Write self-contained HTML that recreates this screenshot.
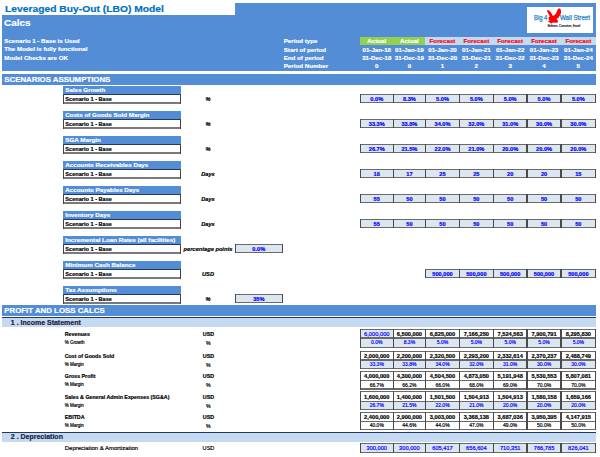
<!DOCTYPE html>
<html><head><meta charset="utf-8"><title>LBO Model - Calcs</title>
<style>
html,body{margin:0;padding:0;background:#fff;}
body{width:600px;height:457px;position:relative;overflow:hidden;font-family:"Liberation Sans",sans-serif;}
#s div{position:absolute;box-sizing:border-box;}
#s .t{white-space:nowrap;overflow:visible;-webkit-text-stroke:0.18px currentColor;}
</style></head><body><div id="s">
<div style="left:2.30px;top:15.00px;width:593.70px;height:55.60px;background:#538DD5;"></div>
<div style="left:235.10px;top:3.00px;width:360.90px;height:12.50px;background:#538DD5;"></div>
<div class="t" style="top:2.00px;height:14px;line-height:14px;font-size:9.70px;color:#0070C0;font-weight:700;left:4.60px;transform:scaleX(1.062);transform-origin:0 50%;">Leveraged Buy-Out (LBO) Model</div>
<div class="t" style="top:16.00px;height:14px;line-height:14px;font-size:9.60px;color:#fff;font-weight:700;left:4.40px;transform:scaleX(1.04);transform-origin:0 50%;">Calcs</div>
<div class="t" style="top:36.10px;height:10px;line-height:10px;font-size:6.20px;color:#fff;font-weight:700;left:4.30px;">Scenario 1 - Base is Used</div>
<div class="t" style="top:44.40px;height:10px;line-height:10px;font-size:6.20px;color:#fff;font-weight:700;left:4.30px;">The Model is fully functional</div>
<div class="t" style="top:52.70px;height:10px;line-height:10px;font-size:6.20px;color:#fff;font-weight:700;left:4.30px;">Model Checks are OK</div>
<div class="t" style="top:36.30px;height:10px;line-height:10px;font-size:6.20px;color:#fff;font-weight:700;left:283.70px;">Period type</div>
<div class="t" style="top:44.55px;height:10px;line-height:10px;font-size:6.20px;color:#fff;font-weight:700;left:283.70px;">Start of period</div>
<div class="t" style="top:52.80px;height:10px;line-height:10px;font-size:6.20px;color:#fff;font-weight:700;left:283.70px;">End of period</div>
<div class="t" style="top:61.05px;height:10px;line-height:10px;font-size:6.20px;color:#fff;font-weight:700;left:283.70px;">Period Number</div>
<div style="left:360.30px;top:37.00px;width:65.00px;height:8.35px;background:#92D050;"></div>
<div style="left:425.30px;top:37.00px;width:170.70px;height:8.35px;background:#C5D9F1;"></div>
<div class="t" style="top:36.30px;height:10px;line-height:10px;font-size:6.20px;color:#fff;font-weight:700;left:356.75px;width:40.00px;text-align:center;">Actual</div>
<div class="t" style="top:44.55px;height:10px;line-height:10px;font-size:6.20px;color:#fff;font-weight:700;left:356.75px;width:40.00px;text-align:center;">01-Jan-18</div>
<div class="t" style="top:52.80px;height:10px;line-height:10px;font-size:6.20px;color:#fff;font-weight:700;left:356.75px;width:40.00px;text-align:center;">31-Dec-18</div>
<div class="t" style="top:61.05px;height:10px;line-height:10px;font-size:6.20px;color:#fff;font-weight:700;left:356.75px;width:40.00px;text-align:center;">0</div>
<div class="t" style="top:36.30px;height:10px;line-height:10px;font-size:6.20px;color:#fff;font-weight:700;left:389.40px;width:40.00px;text-align:center;">Actual</div>
<div class="t" style="top:44.55px;height:10px;line-height:10px;font-size:6.20px;color:#fff;font-weight:700;left:389.40px;width:40.00px;text-align:center;">01-Jan-19</div>
<div class="t" style="top:52.80px;height:10px;line-height:10px;font-size:6.20px;color:#fff;font-weight:700;left:389.40px;width:40.00px;text-align:center;">31-Dec-19</div>
<div class="t" style="top:61.05px;height:10px;line-height:10px;font-size:6.20px;color:#fff;font-weight:700;left:389.40px;width:40.00px;text-align:center;">0</div>
<div class="t" style="top:36.30px;height:10px;line-height:10px;font-size:6.20px;color:#FF0000;font-weight:700;left:422.50px;width:40.00px;text-align:center;">Forecast</div>
<div class="t" style="top:44.55px;height:10px;line-height:10px;font-size:6.20px;color:#fff;font-weight:700;left:422.50px;width:40.00px;text-align:center;">01-Jan-20</div>
<div class="t" style="top:52.80px;height:10px;line-height:10px;font-size:6.20px;color:#fff;font-weight:700;left:422.50px;width:40.00px;text-align:center;">31-Dec-20</div>
<div class="t" style="top:61.05px;height:10px;line-height:10px;font-size:6.20px;color:#fff;font-weight:700;left:422.50px;width:40.00px;text-align:center;">1</div>
<div class="t" style="top:36.30px;height:10px;line-height:10px;font-size:6.20px;color:#FF0000;font-weight:700;left:456.35px;width:40.00px;text-align:center;">Forecast</div>
<div class="t" style="top:44.55px;height:10px;line-height:10px;font-size:6.20px;color:#fff;font-weight:700;left:456.35px;width:40.00px;text-align:center;">01-Jan-21</div>
<div class="t" style="top:52.80px;height:10px;line-height:10px;font-size:6.20px;color:#fff;font-weight:700;left:456.35px;width:40.00px;text-align:center;">31-Dec-21</div>
<div class="t" style="top:61.05px;height:10px;line-height:10px;font-size:6.20px;color:#fff;font-weight:700;left:456.35px;width:40.00px;text-align:center;">2</div>
<div class="t" style="top:36.30px;height:10px;line-height:10px;font-size:6.20px;color:#FF0000;font-weight:700;left:490.20px;width:40.00px;text-align:center;">Forecast</div>
<div class="t" style="top:44.55px;height:10px;line-height:10px;font-size:6.20px;color:#fff;font-weight:700;left:490.20px;width:40.00px;text-align:center;">01-Jan-22</div>
<div class="t" style="top:52.80px;height:10px;line-height:10px;font-size:6.20px;color:#fff;font-weight:700;left:490.20px;width:40.00px;text-align:center;">31-Dec-22</div>
<div class="t" style="top:61.05px;height:10px;line-height:10px;font-size:6.20px;color:#fff;font-weight:700;left:490.20px;width:40.00px;text-align:center;">3</div>
<div class="t" style="top:36.30px;height:10px;line-height:10px;font-size:6.20px;color:#FF0000;font-weight:700;left:524.05px;width:40.00px;text-align:center;">Forecast</div>
<div class="t" style="top:44.55px;height:10px;line-height:10px;font-size:6.20px;color:#fff;font-weight:700;left:524.05px;width:40.00px;text-align:center;">01-Jan-23</div>
<div class="t" style="top:52.80px;height:10px;line-height:10px;font-size:6.20px;color:#fff;font-weight:700;left:524.05px;width:40.00px;text-align:center;">31-Dec-23</div>
<div class="t" style="top:61.05px;height:10px;line-height:10px;font-size:6.20px;color:#fff;font-weight:700;left:524.05px;width:40.00px;text-align:center;">4</div>
<div class="t" style="top:36.30px;height:10px;line-height:10px;font-size:6.20px;color:#FF0000;font-weight:700;left:558.35px;width:40.00px;text-align:center;">Forecast</div>
<div class="t" style="top:44.55px;height:10px;line-height:10px;font-size:6.20px;color:#fff;font-weight:700;left:558.35px;width:40.00px;text-align:center;">01-Jan-24</div>
<div class="t" style="top:52.80px;height:10px;line-height:10px;font-size:6.20px;color:#fff;font-weight:700;left:558.35px;width:40.00px;text-align:center;">31-Dec-24</div>
<div class="t" style="top:61.05px;height:10px;line-height:10px;font-size:6.20px;color:#fff;font-weight:700;left:558.35px;width:40.00px;text-align:center;">5</div>
<div style="left:527.00px;top:6.70px;width:66.00px;height:26.00px;background:#fff;"></div>
<svg style="position:absolute;left:540px;top:4px" width="30" height="24" viewBox="0 0 571 457"><path d="M132 112 L172 126 L212 168 L243 222 L272 215 L300 185 L322 145 L338 100 L362 80 L392 96 L402 150 L388 210 L355 258 L312 288 L342 318 L338 350 L292 356 L245 350 L208 376 L192 352 L150 338 L182 312 L165 292 L160 256 L186 236 L170 200 L146 160 Z" fill="#FF0000"/></svg>
<div class="t" style="top:12.90px;height:10px;line-height:10px;font-size:6.50px;color:#2584C8;font-weight:400;left:534.00px;transform:scaleX(0.9);transform-origin:0 50%;-webkit-text-stroke:0.25px;">Big 4</div>
<div class="t" style="top:12.90px;height:10px;line-height:10px;font-size:6.50px;color:#2584C8;font-weight:400;left:560.00px;transform:scaleX(0.95);transform-origin:0 50%;-webkit-text-stroke:0.25px;">Wall Street</div>
<div class="t" style="top:20.80px;height:10px;line-height:10px;font-size:3.70px;color:#111;font-weight:400;left:533.70px;width:60.00px;text-align:center;transform:scaleX(0.8);">Believe, Conceive, Excel</div>
<div style="left:2.30px;top:74.00px;width:593.70px;height:10.75px;background:#538DD5;"></div>
<div class="t" style="top:74.50px;height:10px;line-height:10px;font-size:7.85px;color:#fff;font-weight:700;left:4.30px;">SCENARIOS ASSUMPTIONS</div>
<div style="left:63.40px;top:86.10px;width:117.60px;height:8.20px;background:#538DD5;"></div>
<div class="t" style="top:85.30px;height:10px;line-height:10px;font-size:6.25px;color:#fff;font-weight:700;left:65.30px;">Sales Growth</div>
<div style="left:63.40px;top:94.00px;width:117.60px;height:9.60px;background:#fff;"></div>
<div style="left:63.40px;top:102.35px;width:117.60px;height:1.50px;background:#7a7a7a;"></div>
<div style="left:63.40px;top:93.95px;width:117.60px;height:0.70px;background:#2b3850;"></div>
<div style="left:63.40px;top:94.10px;width:1.00px;height:9.60px;background:#444;"></div>
<div style="left:180.00px;top:94.10px;width:1.00px;height:9.60px;background:#444;"></div>
<div class="t" style="top:93.85px;height:10px;line-height:10px;font-size:5.60px;color:#000;font-weight:700;left:65.30px;">Scenario 1 - Base</div>
<div class="t" style="top:93.85px;height:10px;line-height:10px;font-size:5.70px;color:#000;font-weight:700;font-style:italic;left:178.00px;width:60.00px;text-align:center;">%</div>
<div style="left:360.30px;top:94.25px;width:235.40px;height:8.40px;background:#DCE6F1;"></div>
<div style="left:359.80px;top:93.75px;width:236.40px;height:1.00px;background:#6a6a6a;"></div>
<div style="left:359.80px;top:102.02px;width:236.40px;height:1.25px;background:#6a6a6a;"></div>
<div style="left:359.75px;top:93.75px;width:1.10px;height:9.50px;background:#4a4a4a;"></div>
<div style="left:392.50px;top:93.75px;width:1.40px;height:9.50px;background:#4a4a4a;"></div>
<div style="left:424.90px;top:93.75px;width:1.40px;height:9.50px;background:#4a4a4a;"></div>
<div style="left:458.70px;top:93.75px;width:1.40px;height:9.50px;background:#4a4a4a;"></div>
<div style="left:492.60px;top:93.75px;width:1.40px;height:9.50px;background:#4a4a4a;"></div>
<div style="left:526.40px;top:93.75px;width:1.40px;height:9.50px;background:#4a4a4a;"></div>
<div style="left:560.30px;top:93.75px;width:1.40px;height:9.50px;background:#4a4a4a;"></div>
<div style="left:595.15px;top:93.75px;width:1.10px;height:9.50px;background:#4a4a4a;"></div>
<div class="t" style="top:93.85px;height:10px;line-height:10px;font-size:5.65px;color:#0000FF;font-weight:700;left:359.75px;width:34.00px;text-align:center;">0.0%</div>
<div class="t" style="top:93.85px;height:10px;line-height:10px;font-size:5.65px;color:#0000FF;font-weight:700;left:392.40px;width:34.00px;text-align:center;">8.3%</div>
<div class="t" style="top:93.85px;height:10px;line-height:10px;font-size:5.65px;color:#0000FF;font-weight:700;left:425.50px;width:34.00px;text-align:center;">5.0%</div>
<div class="t" style="top:93.85px;height:10px;line-height:10px;font-size:5.65px;color:#0000FF;font-weight:700;left:459.35px;width:34.00px;text-align:center;">5.0%</div>
<div class="t" style="top:93.85px;height:10px;line-height:10px;font-size:5.65px;color:#0000FF;font-weight:700;left:493.20px;width:34.00px;text-align:center;">5.0%</div>
<div class="t" style="top:93.85px;height:10px;line-height:10px;font-size:5.65px;color:#0000FF;font-weight:700;left:527.05px;width:34.00px;text-align:center;">5.0%</div>
<div class="t" style="top:93.85px;height:10px;line-height:10px;font-size:5.65px;color:#0000FF;font-weight:700;left:561.35px;width:34.00px;text-align:center;">5.0%</div>
<div style="left:63.40px;top:111.10px;width:117.60px;height:8.20px;background:#538DD5;"></div>
<div class="t" style="top:110.30px;height:10px;line-height:10px;font-size:6.25px;color:#fff;font-weight:700;left:65.30px;">Costs of Goods Sold Margin</div>
<div style="left:63.40px;top:119.00px;width:117.60px;height:9.60px;background:#fff;"></div>
<div style="left:63.40px;top:127.35px;width:117.60px;height:1.50px;background:#7a7a7a;"></div>
<div style="left:63.40px;top:118.95px;width:117.60px;height:0.70px;background:#2b3850;"></div>
<div style="left:63.40px;top:119.10px;width:1.00px;height:9.60px;background:#444;"></div>
<div style="left:180.00px;top:119.10px;width:1.00px;height:9.60px;background:#444;"></div>
<div class="t" style="top:118.85px;height:10px;line-height:10px;font-size:5.60px;color:#000;font-weight:700;left:65.30px;">Scenario 1 - Base</div>
<div class="t" style="top:118.85px;height:10px;line-height:10px;font-size:5.70px;color:#000;font-weight:700;font-style:italic;left:178.00px;width:60.00px;text-align:center;">%</div>
<div style="left:360.30px;top:119.25px;width:235.40px;height:8.40px;background:#DCE6F1;"></div>
<div style="left:359.80px;top:118.75px;width:236.40px;height:1.00px;background:#6a6a6a;"></div>
<div style="left:359.80px;top:127.02px;width:236.40px;height:1.25px;background:#6a6a6a;"></div>
<div style="left:359.75px;top:118.75px;width:1.10px;height:9.50px;background:#4a4a4a;"></div>
<div style="left:392.50px;top:118.75px;width:1.40px;height:9.50px;background:#4a4a4a;"></div>
<div style="left:424.90px;top:118.75px;width:1.40px;height:9.50px;background:#4a4a4a;"></div>
<div style="left:458.70px;top:118.75px;width:1.40px;height:9.50px;background:#4a4a4a;"></div>
<div style="left:492.60px;top:118.75px;width:1.40px;height:9.50px;background:#4a4a4a;"></div>
<div style="left:526.40px;top:118.75px;width:1.40px;height:9.50px;background:#4a4a4a;"></div>
<div style="left:560.30px;top:118.75px;width:1.40px;height:9.50px;background:#4a4a4a;"></div>
<div style="left:595.15px;top:118.75px;width:1.10px;height:9.50px;background:#4a4a4a;"></div>
<div class="t" style="top:118.85px;height:10px;line-height:10px;font-size:5.65px;color:#0000FF;font-weight:700;left:359.75px;width:34.00px;text-align:center;">33.3%</div>
<div class="t" style="top:118.85px;height:10px;line-height:10px;font-size:5.65px;color:#0000FF;font-weight:700;left:392.40px;width:34.00px;text-align:center;">33.8%</div>
<div class="t" style="top:118.85px;height:10px;line-height:10px;font-size:5.65px;color:#0000FF;font-weight:700;left:425.50px;width:34.00px;text-align:center;">34.0%</div>
<div class="t" style="top:118.85px;height:10px;line-height:10px;font-size:5.65px;color:#0000FF;font-weight:700;left:459.35px;width:34.00px;text-align:center;">32.0%</div>
<div class="t" style="top:118.85px;height:10px;line-height:10px;font-size:5.65px;color:#0000FF;font-weight:700;left:493.20px;width:34.00px;text-align:center;">31.0%</div>
<div class="t" style="top:118.85px;height:10px;line-height:10px;font-size:5.65px;color:#0000FF;font-weight:700;left:527.05px;width:34.00px;text-align:center;">30.0%</div>
<div class="t" style="top:118.85px;height:10px;line-height:10px;font-size:5.65px;color:#0000FF;font-weight:700;left:561.35px;width:34.00px;text-align:center;">30.0%</div>
<div style="left:63.40px;top:136.10px;width:117.60px;height:8.20px;background:#538DD5;"></div>
<div class="t" style="top:135.30px;height:10px;line-height:10px;font-size:6.25px;color:#fff;font-weight:700;left:65.30px;">SGA Margin</div>
<div style="left:63.40px;top:144.00px;width:117.60px;height:9.60px;background:#fff;"></div>
<div style="left:63.40px;top:152.35px;width:117.60px;height:1.50px;background:#7a7a7a;"></div>
<div style="left:63.40px;top:143.95px;width:117.60px;height:0.70px;background:#2b3850;"></div>
<div style="left:63.40px;top:144.10px;width:1.00px;height:9.60px;background:#444;"></div>
<div style="left:180.00px;top:144.10px;width:1.00px;height:9.60px;background:#444;"></div>
<div class="t" style="top:143.85px;height:10px;line-height:10px;font-size:5.60px;color:#000;font-weight:700;left:65.30px;">Scenario 1 - Base</div>
<div class="t" style="top:143.85px;height:10px;line-height:10px;font-size:5.70px;color:#000;font-weight:700;font-style:italic;left:178.00px;width:60.00px;text-align:center;">%</div>
<div style="left:360.30px;top:144.25px;width:235.40px;height:8.40px;background:#DCE6F1;"></div>
<div style="left:359.80px;top:143.75px;width:236.40px;height:1.00px;background:#6a6a6a;"></div>
<div style="left:359.80px;top:152.03px;width:236.40px;height:1.25px;background:#6a6a6a;"></div>
<div style="left:359.75px;top:143.75px;width:1.10px;height:9.50px;background:#4a4a4a;"></div>
<div style="left:392.50px;top:143.75px;width:1.40px;height:9.50px;background:#4a4a4a;"></div>
<div style="left:424.90px;top:143.75px;width:1.40px;height:9.50px;background:#4a4a4a;"></div>
<div style="left:458.70px;top:143.75px;width:1.40px;height:9.50px;background:#4a4a4a;"></div>
<div style="left:492.60px;top:143.75px;width:1.40px;height:9.50px;background:#4a4a4a;"></div>
<div style="left:526.40px;top:143.75px;width:1.40px;height:9.50px;background:#4a4a4a;"></div>
<div style="left:560.30px;top:143.75px;width:1.40px;height:9.50px;background:#4a4a4a;"></div>
<div style="left:595.15px;top:143.75px;width:1.10px;height:9.50px;background:#4a4a4a;"></div>
<div class="t" style="top:143.85px;height:10px;line-height:10px;font-size:5.65px;color:#0000FF;font-weight:700;left:359.75px;width:34.00px;text-align:center;">26.7%</div>
<div class="t" style="top:143.85px;height:10px;line-height:10px;font-size:5.65px;color:#0000FF;font-weight:700;left:392.40px;width:34.00px;text-align:center;">21.5%</div>
<div class="t" style="top:143.85px;height:10px;line-height:10px;font-size:5.65px;color:#0000FF;font-weight:700;left:425.50px;width:34.00px;text-align:center;">22.0%</div>
<div class="t" style="top:143.85px;height:10px;line-height:10px;font-size:5.65px;color:#0000FF;font-weight:700;left:459.35px;width:34.00px;text-align:center;">21.0%</div>
<div class="t" style="top:143.85px;height:10px;line-height:10px;font-size:5.65px;color:#0000FF;font-weight:700;left:493.20px;width:34.00px;text-align:center;">20.0%</div>
<div class="t" style="top:143.85px;height:10px;line-height:10px;font-size:5.65px;color:#0000FF;font-weight:700;left:527.05px;width:34.00px;text-align:center;">20.0%</div>
<div class="t" style="top:143.85px;height:10px;line-height:10px;font-size:5.65px;color:#0000FF;font-weight:700;left:561.35px;width:34.00px;text-align:center;">20.0%</div>
<div style="left:63.40px;top:161.10px;width:117.60px;height:8.20px;background:#538DD5;"></div>
<div class="t" style="top:160.30px;height:10px;line-height:10px;font-size:6.25px;color:#fff;font-weight:700;left:65.30px;">Accounts Receivables Days</div>
<div style="left:63.40px;top:169.00px;width:117.60px;height:9.60px;background:#fff;"></div>
<div style="left:63.40px;top:177.35px;width:117.60px;height:1.50px;background:#7a7a7a;"></div>
<div style="left:63.40px;top:168.95px;width:117.60px;height:0.70px;background:#2b3850;"></div>
<div style="left:63.40px;top:169.10px;width:1.00px;height:9.60px;background:#444;"></div>
<div style="left:180.00px;top:169.10px;width:1.00px;height:9.60px;background:#444;"></div>
<div class="t" style="top:168.85px;height:10px;line-height:10px;font-size:5.60px;color:#000;font-weight:700;left:65.30px;">Scenario 1 - Base</div>
<div class="t" style="top:168.85px;height:10px;line-height:10px;font-size:5.70px;color:#000;font-weight:700;font-style:italic;left:178.00px;width:60.00px;text-align:center;">Days</div>
<div style="left:360.30px;top:169.25px;width:235.40px;height:8.40px;background:#DCE6F1;"></div>
<div style="left:359.80px;top:168.75px;width:236.40px;height:1.00px;background:#6a6a6a;"></div>
<div style="left:359.80px;top:177.03px;width:236.40px;height:1.25px;background:#6a6a6a;"></div>
<div style="left:359.75px;top:168.75px;width:1.10px;height:9.50px;background:#4a4a4a;"></div>
<div style="left:392.50px;top:168.75px;width:1.40px;height:9.50px;background:#4a4a4a;"></div>
<div style="left:424.90px;top:168.75px;width:1.40px;height:9.50px;background:#4a4a4a;"></div>
<div style="left:458.70px;top:168.75px;width:1.40px;height:9.50px;background:#4a4a4a;"></div>
<div style="left:492.60px;top:168.75px;width:1.40px;height:9.50px;background:#4a4a4a;"></div>
<div style="left:526.40px;top:168.75px;width:1.40px;height:9.50px;background:#4a4a4a;"></div>
<div style="left:560.30px;top:168.75px;width:1.40px;height:9.50px;background:#4a4a4a;"></div>
<div style="left:595.15px;top:168.75px;width:1.10px;height:9.50px;background:#4a4a4a;"></div>
<div class="t" style="top:168.85px;height:10px;line-height:10px;font-size:5.65px;color:#0000FF;font-weight:700;left:359.75px;width:34.00px;text-align:center;">18</div>
<div class="t" style="top:168.85px;height:10px;line-height:10px;font-size:5.65px;color:#0000FF;font-weight:700;left:392.40px;width:34.00px;text-align:center;">17</div>
<div class="t" style="top:168.85px;height:10px;line-height:10px;font-size:5.65px;color:#0000FF;font-weight:700;left:425.50px;width:34.00px;text-align:center;">25</div>
<div class="t" style="top:168.85px;height:10px;line-height:10px;font-size:5.65px;color:#0000FF;font-weight:700;left:459.35px;width:34.00px;text-align:center;">25</div>
<div class="t" style="top:168.85px;height:10px;line-height:10px;font-size:5.65px;color:#0000FF;font-weight:700;left:493.20px;width:34.00px;text-align:center;">20</div>
<div class="t" style="top:168.85px;height:10px;line-height:10px;font-size:5.65px;color:#0000FF;font-weight:700;left:527.05px;width:34.00px;text-align:center;">20</div>
<div class="t" style="top:168.85px;height:10px;line-height:10px;font-size:5.65px;color:#0000FF;font-weight:700;left:561.35px;width:34.00px;text-align:center;">15</div>
<div style="left:63.40px;top:186.10px;width:117.60px;height:8.20px;background:#538DD5;"></div>
<div class="t" style="top:185.30px;height:10px;line-height:10px;font-size:6.25px;color:#fff;font-weight:700;left:65.30px;">Accounts Payables Days</div>
<div style="left:63.40px;top:194.00px;width:117.60px;height:9.60px;background:#fff;"></div>
<div style="left:63.40px;top:202.35px;width:117.60px;height:1.50px;background:#7a7a7a;"></div>
<div style="left:63.40px;top:193.95px;width:117.60px;height:0.70px;background:#2b3850;"></div>
<div style="left:63.40px;top:194.10px;width:1.00px;height:9.60px;background:#444;"></div>
<div style="left:180.00px;top:194.10px;width:1.00px;height:9.60px;background:#444;"></div>
<div class="t" style="top:193.85px;height:10px;line-height:10px;font-size:5.60px;color:#000;font-weight:700;left:65.30px;">Scenario 1 - Base</div>
<div class="t" style="top:193.85px;height:10px;line-height:10px;font-size:5.70px;color:#000;font-weight:700;font-style:italic;left:178.00px;width:60.00px;text-align:center;">Days</div>
<div style="left:360.30px;top:194.25px;width:235.40px;height:8.40px;background:#DCE6F1;"></div>
<div style="left:359.80px;top:193.75px;width:236.40px;height:1.00px;background:#6a6a6a;"></div>
<div style="left:359.80px;top:202.03px;width:236.40px;height:1.25px;background:#6a6a6a;"></div>
<div style="left:359.75px;top:193.75px;width:1.10px;height:9.50px;background:#4a4a4a;"></div>
<div style="left:392.50px;top:193.75px;width:1.40px;height:9.50px;background:#4a4a4a;"></div>
<div style="left:424.90px;top:193.75px;width:1.40px;height:9.50px;background:#4a4a4a;"></div>
<div style="left:458.70px;top:193.75px;width:1.40px;height:9.50px;background:#4a4a4a;"></div>
<div style="left:492.60px;top:193.75px;width:1.40px;height:9.50px;background:#4a4a4a;"></div>
<div style="left:526.40px;top:193.75px;width:1.40px;height:9.50px;background:#4a4a4a;"></div>
<div style="left:560.30px;top:193.75px;width:1.40px;height:9.50px;background:#4a4a4a;"></div>
<div style="left:595.15px;top:193.75px;width:1.10px;height:9.50px;background:#4a4a4a;"></div>
<div class="t" style="top:193.85px;height:10px;line-height:10px;font-size:5.65px;color:#0000FF;font-weight:700;left:359.75px;width:34.00px;text-align:center;">55</div>
<div class="t" style="top:193.85px;height:10px;line-height:10px;font-size:5.65px;color:#0000FF;font-weight:700;left:392.40px;width:34.00px;text-align:center;">50</div>
<div class="t" style="top:193.85px;height:10px;line-height:10px;font-size:5.65px;color:#0000FF;font-weight:700;left:425.50px;width:34.00px;text-align:center;">50</div>
<div class="t" style="top:193.85px;height:10px;line-height:10px;font-size:5.65px;color:#0000FF;font-weight:700;left:459.35px;width:34.00px;text-align:center;">50</div>
<div class="t" style="top:193.85px;height:10px;line-height:10px;font-size:5.65px;color:#0000FF;font-weight:700;left:493.20px;width:34.00px;text-align:center;">50</div>
<div class="t" style="top:193.85px;height:10px;line-height:10px;font-size:5.65px;color:#0000FF;font-weight:700;left:527.05px;width:34.00px;text-align:center;">50</div>
<div class="t" style="top:193.85px;height:10px;line-height:10px;font-size:5.65px;color:#0000FF;font-weight:700;left:561.35px;width:34.00px;text-align:center;">50</div>
<div style="left:63.40px;top:211.10px;width:117.60px;height:8.20px;background:#538DD5;"></div>
<div class="t" style="top:210.30px;height:10px;line-height:10px;font-size:6.25px;color:#fff;font-weight:700;left:65.30px;">Inventory Days</div>
<div style="left:63.40px;top:219.00px;width:117.60px;height:9.60px;background:#fff;"></div>
<div style="left:63.40px;top:227.35px;width:117.60px;height:1.50px;background:#7a7a7a;"></div>
<div style="left:63.40px;top:218.95px;width:117.60px;height:0.70px;background:#2b3850;"></div>
<div style="left:63.40px;top:219.10px;width:1.00px;height:9.60px;background:#444;"></div>
<div style="left:180.00px;top:219.10px;width:1.00px;height:9.60px;background:#444;"></div>
<div class="t" style="top:218.85px;height:10px;line-height:10px;font-size:5.60px;color:#000;font-weight:700;left:65.30px;">Scenario 1 - Base</div>
<div class="t" style="top:218.85px;height:10px;line-height:10px;font-size:5.70px;color:#000;font-weight:700;font-style:italic;left:178.00px;width:60.00px;text-align:center;">Days</div>
<div style="left:360.30px;top:219.25px;width:235.40px;height:8.40px;background:#DCE6F1;"></div>
<div style="left:359.80px;top:218.75px;width:236.40px;height:1.00px;background:#6a6a6a;"></div>
<div style="left:359.80px;top:227.03px;width:236.40px;height:1.25px;background:#6a6a6a;"></div>
<div style="left:359.75px;top:218.75px;width:1.10px;height:9.50px;background:#4a4a4a;"></div>
<div style="left:392.50px;top:218.75px;width:1.40px;height:9.50px;background:#4a4a4a;"></div>
<div style="left:424.90px;top:218.75px;width:1.40px;height:9.50px;background:#4a4a4a;"></div>
<div style="left:458.70px;top:218.75px;width:1.40px;height:9.50px;background:#4a4a4a;"></div>
<div style="left:492.60px;top:218.75px;width:1.40px;height:9.50px;background:#4a4a4a;"></div>
<div style="left:526.40px;top:218.75px;width:1.40px;height:9.50px;background:#4a4a4a;"></div>
<div style="left:560.30px;top:218.75px;width:1.40px;height:9.50px;background:#4a4a4a;"></div>
<div style="left:595.15px;top:218.75px;width:1.10px;height:9.50px;background:#4a4a4a;"></div>
<div class="t" style="top:218.85px;height:10px;line-height:10px;font-size:5.65px;color:#0000FF;font-weight:700;left:359.75px;width:34.00px;text-align:center;">55</div>
<div class="t" style="top:218.85px;height:10px;line-height:10px;font-size:5.65px;color:#0000FF;font-weight:700;left:392.40px;width:34.00px;text-align:center;">50</div>
<div class="t" style="top:218.85px;height:10px;line-height:10px;font-size:5.65px;color:#0000FF;font-weight:700;left:425.50px;width:34.00px;text-align:center;">50</div>
<div class="t" style="top:218.85px;height:10px;line-height:10px;font-size:5.65px;color:#0000FF;font-weight:700;left:459.35px;width:34.00px;text-align:center;">50</div>
<div class="t" style="top:218.85px;height:10px;line-height:10px;font-size:5.65px;color:#0000FF;font-weight:700;left:493.20px;width:34.00px;text-align:center;">50</div>
<div class="t" style="top:218.85px;height:10px;line-height:10px;font-size:5.65px;color:#0000FF;font-weight:700;left:527.05px;width:34.00px;text-align:center;">50</div>
<div class="t" style="top:218.85px;height:10px;line-height:10px;font-size:5.65px;color:#0000FF;font-weight:700;left:561.35px;width:34.00px;text-align:center;">50</div>
<div style="left:63.40px;top:236.10px;width:117.60px;height:8.20px;background:#538DD5;"></div>
<div class="t" style="top:235.30px;height:10px;line-height:10px;font-size:6.25px;color:#fff;font-weight:700;left:65.30px;">Incremental Loan Rates (all facilities)</div>
<div style="left:63.40px;top:244.00px;width:117.60px;height:9.60px;background:#fff;"></div>
<div style="left:63.40px;top:252.35px;width:117.60px;height:1.50px;background:#7a7a7a;"></div>
<div style="left:63.40px;top:243.95px;width:117.60px;height:0.70px;background:#2b3850;"></div>
<div style="left:63.40px;top:244.10px;width:1.00px;height:9.60px;background:#444;"></div>
<div style="left:180.00px;top:244.10px;width:1.00px;height:9.60px;background:#444;"></div>
<div class="t" style="top:243.85px;height:10px;line-height:10px;font-size:5.60px;color:#000;font-weight:700;left:65.30px;">Scenario 1 - Base</div>
<div class="t" style="top:243.85px;height:10px;line-height:10px;font-size:5.70px;color:#000;font-weight:700;font-style:italic;left:178.00px;width:60.00px;text-align:center;">percentage points</div>
<div style="left:235.40px;top:244.25px;width:47.40px;height:8.40px;background:#DCE6F1;"></div>
<div style="left:234.90px;top:243.75px;width:48.40px;height:1.00px;background:#6a6a6a;"></div>
<div style="left:234.90px;top:252.03px;width:48.40px;height:1.25px;background:#6a6a6a;"></div>
<div style="left:234.85px;top:243.75px;width:1.10px;height:9.50px;background:#4a4a4a;"></div>
<div style="left:282.25px;top:243.75px;width:1.10px;height:9.50px;background:#4a4a4a;"></div>
<div class="t" style="top:243.85px;height:10px;line-height:10px;font-size:5.65px;color:#0000FF;font-weight:700;left:238.80px;width:40.00px;text-align:center;">0.0%</div>
<div style="left:63.40px;top:261.10px;width:117.60px;height:8.20px;background:#538DD5;"></div>
<div class="t" style="top:260.30px;height:10px;line-height:10px;font-size:6.25px;color:#fff;font-weight:700;left:65.30px;">Minimum Cash Balance</div>
<div style="left:63.40px;top:269.00px;width:117.60px;height:9.60px;background:#fff;"></div>
<div style="left:63.40px;top:277.35px;width:117.60px;height:1.50px;background:#7a7a7a;"></div>
<div style="left:63.40px;top:268.95px;width:117.60px;height:0.70px;background:#2b3850;"></div>
<div style="left:63.40px;top:269.10px;width:1.00px;height:9.60px;background:#444;"></div>
<div style="left:180.00px;top:269.10px;width:1.00px;height:9.60px;background:#444;"></div>
<div class="t" style="top:268.85px;height:10px;line-height:10px;font-size:5.60px;color:#000;font-weight:700;left:65.30px;">Scenario 1 - Base</div>
<div class="t" style="top:268.85px;height:10px;line-height:10px;font-size:5.70px;color:#000;font-weight:700;font-style:italic;left:178.00px;width:60.00px;text-align:center;">USD</div>
<div style="left:425.60px;top:269.25px;width:170.10px;height:8.40px;background:#DCE6F1;"></div>
<div style="left:425.10px;top:268.75px;width:171.10px;height:1.00px;background:#6a6a6a;"></div>
<div style="left:425.10px;top:277.03px;width:171.10px;height:1.25px;background:#6a6a6a;"></div>
<div style="left:425.05px;top:268.75px;width:1.10px;height:9.50px;background:#4a4a4a;"></div>
<div style="left:458.70px;top:268.75px;width:1.40px;height:9.50px;background:#4a4a4a;"></div>
<div style="left:492.60px;top:268.75px;width:1.40px;height:9.50px;background:#4a4a4a;"></div>
<div style="left:526.40px;top:268.75px;width:1.40px;height:9.50px;background:#4a4a4a;"></div>
<div style="left:560.30px;top:268.75px;width:1.40px;height:9.50px;background:#4a4a4a;"></div>
<div style="left:595.15px;top:268.75px;width:1.10px;height:9.50px;background:#4a4a4a;"></div>
<div class="t" style="top:268.85px;height:10px;line-height:10px;font-size:5.65px;color:#0000FF;font-weight:700;left:425.50px;width:34.00px;text-align:center;">500,000</div>
<div class="t" style="top:268.85px;height:10px;line-height:10px;font-size:5.65px;color:#0000FF;font-weight:700;left:459.35px;width:34.00px;text-align:center;">500,000</div>
<div class="t" style="top:268.85px;height:10px;line-height:10px;font-size:5.65px;color:#0000FF;font-weight:700;left:493.20px;width:34.00px;text-align:center;">500,000</div>
<div class="t" style="top:268.85px;height:10px;line-height:10px;font-size:5.65px;color:#0000FF;font-weight:700;left:527.05px;width:34.00px;text-align:center;">500,000</div>
<div class="t" style="top:268.85px;height:10px;line-height:10px;font-size:5.65px;color:#0000FF;font-weight:700;left:561.35px;width:34.00px;text-align:center;">500,000</div>
<div style="left:63.40px;top:286.10px;width:117.60px;height:8.20px;background:#538DD5;"></div>
<div class="t" style="top:285.30px;height:10px;line-height:10px;font-size:6.25px;color:#fff;font-weight:700;left:65.30px;">Tax Assumptions</div>
<div style="left:63.40px;top:294.00px;width:117.60px;height:9.60px;background:#fff;"></div>
<div style="left:63.40px;top:302.35px;width:117.60px;height:1.50px;background:#7a7a7a;"></div>
<div style="left:63.40px;top:293.95px;width:117.60px;height:0.70px;background:#2b3850;"></div>
<div style="left:63.40px;top:294.10px;width:1.00px;height:9.60px;background:#444;"></div>
<div style="left:180.00px;top:294.10px;width:1.00px;height:9.60px;background:#444;"></div>
<div class="t" style="top:293.85px;height:10px;line-height:10px;font-size:5.60px;color:#000;font-weight:700;left:65.30px;">Scenario 1 - Base</div>
<div class="t" style="top:293.85px;height:10px;line-height:10px;font-size:5.70px;color:#000;font-weight:700;font-style:italic;left:178.00px;width:60.00px;text-align:center;">%</div>
<div style="left:235.40px;top:294.25px;width:47.40px;height:8.40px;background:#DCE6F1;"></div>
<div style="left:234.90px;top:293.75px;width:48.40px;height:1.00px;background:#6a6a6a;"></div>
<div style="left:234.90px;top:302.03px;width:48.40px;height:1.25px;background:#6a6a6a;"></div>
<div style="left:234.85px;top:293.75px;width:1.10px;height:9.50px;background:#4a4a4a;"></div>
<div style="left:282.25px;top:293.75px;width:1.10px;height:9.50px;background:#4a4a4a;"></div>
<div class="t" style="top:293.85px;height:10px;line-height:10px;font-size:5.65px;color:#0000FF;font-weight:700;left:238.80px;width:40.00px;text-align:center;">35%</div>
<div style="left:2.30px;top:305.40px;width:593.70px;height:10.70px;background:#538DD5;"></div>
<div class="t" style="top:305.80px;height:10px;line-height:10px;font-size:7.85px;color:#fff;font-weight:700;left:4.30px;">PROFIT AND LOSS CALCS</div>
<div style="left:2.30px;top:316.90px;width:593.70px;height:1.50px;background:#1F3864;"></div>
<div style="left:2.30px;top:318.40px;width:593.70px;height:8.40px;background:#C5D9F1;"></div>
<div class="t" style="top:317.80px;height:10px;line-height:10px;font-size:7.00px;color:#16213E;font-weight:700;left:10.80px;">1 . Income Statement</div>
<div style="left:360.30px;top:329.40px;width:235.40px;height:17.70px;background:#fff;"></div>
<div style="left:360.30px;top:338.00px;width:235.40px;height:9.10px;background:#DCE6F1;"></div>
<div style="left:360.30px;top:329.40px;width:32.90px;height:8.60px;background:#DCE6F1;"></div>
<div style="left:359.80px;top:328.90px;width:236.40px;height:1.00px;background:#6a6a6a;"></div>
<div style="left:359.80px;top:337.45px;width:236.40px;height:1.10px;background:#6a6a6a;"></div>
<div style="left:359.80px;top:346.50px;width:236.40px;height:1.20px;background:#6a6a6a;"></div>
<div style="left:359.75px;top:328.90px;width:1.10px;height:18.80px;background:#4a4a4a;"></div>
<div style="left:392.50px;top:328.90px;width:1.40px;height:18.80px;background:#4a4a4a;"></div>
<div style="left:424.90px;top:328.90px;width:1.40px;height:18.80px;background:#4a4a4a;"></div>
<div style="left:458.70px;top:328.90px;width:1.40px;height:18.80px;background:#4a4a4a;"></div>
<div style="left:492.60px;top:328.90px;width:1.40px;height:18.80px;background:#4a4a4a;"></div>
<div style="left:526.40px;top:328.90px;width:1.40px;height:18.80px;background:#4a4a4a;"></div>
<div style="left:560.30px;top:328.90px;width:1.40px;height:18.80px;background:#4a4a4a;"></div>
<div style="left:595.15px;top:328.90px;width:1.10px;height:18.80px;background:#4a4a4a;"></div>
<div class="t" style="top:328.90px;height:10px;line-height:10px;font-size:5.30px;color:#000;font-weight:700;left:64.80px;">Revenues</div>
<div class="t" style="top:338.15px;height:10px;line-height:10px;font-size:4.50px;color:#000;font-weight:400;left:64.80px;">% Growth</div>
<div class="t" style="top:328.90px;height:10px;line-height:10px;font-size:5.35px;color:#000;font-weight:700;left:188.50px;width:40.00px;text-align:center;">USD</div>
<div class="t" style="top:337.95px;height:10px;line-height:10px;font-size:5.20px;color:#000;font-weight:400;left:188.20px;width:40.00px;text-align:center;">%</div>
<div class="t" style="top:328.90px;height:10px;line-height:10px;font-size:5.75px;color:#0000FF;font-weight:400;left:359.75px;width:34.00px;text-align:center;">6,000,000</div>
<div class="t" style="top:337.45px;height:10px;line-height:10px;font-size:5.00px;color:#0000FF;font-weight:400;left:359.75px;width:34.00px;text-align:center;">0.0%</div>
<div class="t" style="top:328.90px;height:10px;line-height:10px;font-size:5.70px;color:#000;font-weight:700;left:392.40px;width:34.00px;text-align:center;">6,500,000</div>
<div class="t" style="top:337.45px;height:10px;line-height:10px;font-size:5.00px;color:#0000FF;font-weight:400;left:392.40px;width:34.00px;text-align:center;">8.3%</div>
<div class="t" style="top:328.90px;height:10px;line-height:10px;font-size:5.70px;color:#000;font-weight:700;left:425.50px;width:34.00px;text-align:center;">6,825,000</div>
<div class="t" style="top:337.45px;height:10px;line-height:10px;font-size:5.00px;color:#0000FF;font-weight:400;left:425.50px;width:34.00px;text-align:center;">5.0%</div>
<div class="t" style="top:328.90px;height:10px;line-height:10px;font-size:5.70px;color:#000;font-weight:700;left:459.35px;width:34.00px;text-align:center;">7,166,250</div>
<div class="t" style="top:337.45px;height:10px;line-height:10px;font-size:5.00px;color:#0000FF;font-weight:400;left:459.35px;width:34.00px;text-align:center;">5.0%</div>
<div class="t" style="top:328.90px;height:10px;line-height:10px;font-size:5.70px;color:#000;font-weight:700;left:493.20px;width:34.00px;text-align:center;">7,524,563</div>
<div class="t" style="top:337.45px;height:10px;line-height:10px;font-size:5.00px;color:#0000FF;font-weight:400;left:493.20px;width:34.00px;text-align:center;">5.0%</div>
<div class="t" style="top:328.90px;height:10px;line-height:10px;font-size:5.70px;color:#000;font-weight:700;left:527.05px;width:34.00px;text-align:center;">7,900,791</div>
<div class="t" style="top:337.45px;height:10px;line-height:10px;font-size:5.00px;color:#0000FF;font-weight:400;left:527.05px;width:34.00px;text-align:center;">5.0%</div>
<div class="t" style="top:328.90px;height:10px;line-height:10px;font-size:5.70px;color:#000;font-weight:700;left:561.35px;width:34.00px;text-align:center;">8,295,830</div>
<div class="t" style="top:337.45px;height:10px;line-height:10px;font-size:5.00px;color:#0000FF;font-weight:400;left:561.35px;width:34.00px;text-align:center;">5.0%</div>
<div style="left:360.30px;top:351.25px;width:235.40px;height:17.05px;background:#fff;"></div>
<div style="left:360.30px;top:360.00px;width:235.40px;height:8.30px;background:#DCE6F1;"></div>
<div style="left:359.80px;top:350.75px;width:236.40px;height:1.00px;background:#6a6a6a;"></div>
<div style="left:359.80px;top:359.45px;width:236.40px;height:1.10px;background:#6a6a6a;"></div>
<div style="left:359.80px;top:367.70px;width:236.40px;height:1.20px;background:#6a6a6a;"></div>
<div style="left:359.75px;top:350.75px;width:1.10px;height:18.15px;background:#4a4a4a;"></div>
<div style="left:392.50px;top:350.75px;width:1.40px;height:18.15px;background:#4a4a4a;"></div>
<div style="left:424.90px;top:350.75px;width:1.40px;height:18.15px;background:#4a4a4a;"></div>
<div style="left:458.70px;top:350.75px;width:1.40px;height:18.15px;background:#4a4a4a;"></div>
<div style="left:492.60px;top:350.75px;width:1.40px;height:18.15px;background:#4a4a4a;"></div>
<div style="left:526.40px;top:350.75px;width:1.40px;height:18.15px;background:#4a4a4a;"></div>
<div style="left:560.30px;top:350.75px;width:1.40px;height:18.15px;background:#4a4a4a;"></div>
<div style="left:595.15px;top:350.75px;width:1.10px;height:18.15px;background:#4a4a4a;"></div>
<div class="t" style="top:350.82px;height:10px;line-height:10px;font-size:5.30px;color:#000;font-weight:700;left:64.80px;">Cost of Goods Sold</div>
<div class="t" style="top:359.75px;height:10px;line-height:10px;font-size:4.50px;color:#000;font-weight:400;left:64.80px;">% Margin</div>
<div class="t" style="top:350.82px;height:10px;line-height:10px;font-size:5.35px;color:#000;font-weight:700;left:188.50px;width:40.00px;text-align:center;">USD</div>
<div class="t" style="top:359.55px;height:10px;line-height:10px;font-size:5.20px;color:#000;font-weight:400;left:188.20px;width:40.00px;text-align:center;">%</div>
<div class="t" style="top:350.82px;height:10px;line-height:10px;font-size:5.70px;color:#000;font-weight:700;left:359.75px;width:34.00px;text-align:center;">2,000,000</div>
<div class="t" style="top:359.05px;height:10px;line-height:10px;font-size:5.00px;color:#0000FF;font-weight:400;left:359.75px;width:34.00px;text-align:center;">33.3%</div>
<div class="t" style="top:350.82px;height:10px;line-height:10px;font-size:5.70px;color:#000;font-weight:700;left:392.40px;width:34.00px;text-align:center;">2,200,000</div>
<div class="t" style="top:359.05px;height:10px;line-height:10px;font-size:5.00px;color:#0000FF;font-weight:400;left:392.40px;width:34.00px;text-align:center;">33.8%</div>
<div class="t" style="top:350.82px;height:10px;line-height:10px;font-size:5.70px;color:#000;font-weight:700;left:425.50px;width:34.00px;text-align:center;">2,320,500</div>
<div class="t" style="top:359.05px;height:10px;line-height:10px;font-size:5.00px;color:#0000FF;font-weight:400;left:425.50px;width:34.00px;text-align:center;">34.0%</div>
<div class="t" style="top:350.82px;height:10px;line-height:10px;font-size:5.70px;color:#000;font-weight:700;left:459.35px;width:34.00px;text-align:center;">2,293,200</div>
<div class="t" style="top:359.05px;height:10px;line-height:10px;font-size:5.00px;color:#0000FF;font-weight:400;left:459.35px;width:34.00px;text-align:center;">32.0%</div>
<div class="t" style="top:350.82px;height:10px;line-height:10px;font-size:5.70px;color:#000;font-weight:700;left:493.20px;width:34.00px;text-align:center;">2,332,614</div>
<div class="t" style="top:359.05px;height:10px;line-height:10px;font-size:5.00px;color:#0000FF;font-weight:400;left:493.20px;width:34.00px;text-align:center;">31.0%</div>
<div class="t" style="top:350.82px;height:10px;line-height:10px;font-size:5.70px;color:#000;font-weight:700;left:527.05px;width:34.00px;text-align:center;">2,370,237</div>
<div class="t" style="top:359.05px;height:10px;line-height:10px;font-size:5.00px;color:#0000FF;font-weight:400;left:527.05px;width:34.00px;text-align:center;">30.0%</div>
<div class="t" style="top:350.82px;height:10px;line-height:10px;font-size:5.70px;color:#000;font-weight:700;left:561.35px;width:34.00px;text-align:center;">2,488,749</div>
<div class="t" style="top:359.05px;height:10px;line-height:10px;font-size:5.00px;color:#0000FF;font-weight:400;left:561.35px;width:34.00px;text-align:center;">30.0%</div>
<div style="left:360.30px;top:371.25px;width:235.40px;height:17.75px;background:#fff;"></div>
<div style="left:359.80px;top:370.75px;width:236.40px;height:1.00px;background:#6a6a6a;"></div>
<div style="left:359.80px;top:379.70px;width:236.40px;height:1.10px;background:#6a6a6a;"></div>
<div style="left:359.80px;top:388.40px;width:236.40px;height:1.20px;background:#6a6a6a;"></div>
<div style="left:359.75px;top:370.75px;width:1.10px;height:18.85px;background:#4a4a4a;"></div>
<div style="left:392.50px;top:370.75px;width:1.40px;height:18.85px;background:#4a4a4a;"></div>
<div style="left:424.90px;top:370.75px;width:1.40px;height:18.85px;background:#4a4a4a;"></div>
<div style="left:458.70px;top:370.75px;width:1.40px;height:18.85px;background:#4a4a4a;"></div>
<div style="left:492.60px;top:370.75px;width:1.40px;height:18.85px;background:#4a4a4a;"></div>
<div style="left:526.40px;top:370.75px;width:1.40px;height:18.85px;background:#4a4a4a;"></div>
<div style="left:560.30px;top:370.75px;width:1.40px;height:18.85px;background:#4a4a4a;"></div>
<div style="left:595.15px;top:370.75px;width:1.10px;height:18.85px;background:#4a4a4a;"></div>
<div class="t" style="top:370.95px;height:10px;line-height:10px;font-size:5.30px;color:#000;font-weight:700;left:64.80px;">Gross Profit</div>
<div class="t" style="top:380.23px;height:10px;line-height:10px;font-size:4.50px;color:#000;font-weight:400;left:64.80px;">% Margin</div>
<div class="t" style="top:370.95px;height:10px;line-height:10px;font-size:5.35px;color:#000;font-weight:700;left:188.50px;width:40.00px;text-align:center;">USD</div>
<div class="t" style="top:380.02px;height:10px;line-height:10px;font-size:5.20px;color:#000;font-weight:400;left:188.20px;width:40.00px;text-align:center;">%</div>
<div class="t" style="top:370.95px;height:10px;line-height:10px;font-size:5.70px;color:#000;font-weight:700;left:359.75px;width:34.00px;text-align:center;">4,000,000</div>
<div class="t" style="top:379.52px;height:10px;line-height:10px;font-size:5.00px;color:#000;font-weight:400;left:359.75px;width:34.00px;text-align:center;">66.7%</div>
<div class="t" style="top:370.95px;height:10px;line-height:10px;font-size:5.70px;color:#000;font-weight:700;left:392.40px;width:34.00px;text-align:center;">4,300,000</div>
<div class="t" style="top:379.52px;height:10px;line-height:10px;font-size:5.00px;color:#000;font-weight:400;left:392.40px;width:34.00px;text-align:center;">66.2%</div>
<div class="t" style="top:370.95px;height:10px;line-height:10px;font-size:5.70px;color:#000;font-weight:700;left:425.50px;width:34.00px;text-align:center;">4,504,500</div>
<div class="t" style="top:379.52px;height:10px;line-height:10px;font-size:5.00px;color:#000;font-weight:400;left:425.50px;width:34.00px;text-align:center;">66.0%</div>
<div class="t" style="top:370.95px;height:10px;line-height:10px;font-size:5.70px;color:#000;font-weight:700;left:459.35px;width:34.00px;text-align:center;">4,873,050</div>
<div class="t" style="top:379.52px;height:10px;line-height:10px;font-size:5.00px;color:#000;font-weight:400;left:459.35px;width:34.00px;text-align:center;">68.0%</div>
<div class="t" style="top:370.95px;height:10px;line-height:10px;font-size:5.70px;color:#000;font-weight:700;left:493.20px;width:34.00px;text-align:center;">5,191,948</div>
<div class="t" style="top:379.52px;height:10px;line-height:10px;font-size:5.00px;color:#000;font-weight:400;left:493.20px;width:34.00px;text-align:center;">69.0%</div>
<div class="t" style="top:370.95px;height:10px;line-height:10px;font-size:5.70px;color:#000;font-weight:700;left:527.05px;width:34.00px;text-align:center;">5,530,553</div>
<div class="t" style="top:379.52px;height:10px;line-height:10px;font-size:5.00px;color:#000;font-weight:400;left:527.05px;width:34.00px;text-align:center;">70.0%</div>
<div class="t" style="top:370.95px;height:10px;line-height:10px;font-size:5.70px;color:#000;font-weight:700;left:561.35px;width:34.00px;text-align:center;">5,807,081</div>
<div class="t" style="top:379.52px;height:10px;line-height:10px;font-size:5.00px;color:#000;font-weight:400;left:561.35px;width:34.00px;text-align:center;">70.0%</div>
<div style="left:360.30px;top:391.60px;width:235.40px;height:17.70px;background:#fff;"></div>
<div style="left:360.30px;top:401.10px;width:235.40px;height:8.20px;background:#DCE6F1;"></div>
<div style="left:359.80px;top:391.10px;width:236.40px;height:1.00px;background:#6a6a6a;"></div>
<div style="left:359.80px;top:400.55px;width:236.40px;height:1.10px;background:#6a6a6a;"></div>
<div style="left:359.80px;top:408.70px;width:236.40px;height:1.20px;background:#6a6a6a;"></div>
<div style="left:359.75px;top:391.10px;width:1.10px;height:18.80px;background:#4a4a4a;"></div>
<div style="left:392.50px;top:391.10px;width:1.40px;height:18.80px;background:#4a4a4a;"></div>
<div style="left:424.90px;top:391.10px;width:1.40px;height:18.80px;background:#4a4a4a;"></div>
<div style="left:458.70px;top:391.10px;width:1.40px;height:18.80px;background:#4a4a4a;"></div>
<div style="left:492.60px;top:391.10px;width:1.40px;height:18.80px;background:#4a4a4a;"></div>
<div style="left:526.40px;top:391.10px;width:1.40px;height:18.80px;background:#4a4a4a;"></div>
<div style="left:560.30px;top:391.10px;width:1.40px;height:18.80px;background:#4a4a4a;"></div>
<div style="left:595.15px;top:391.10px;width:1.10px;height:18.80px;background:#4a4a4a;"></div>
<div class="t" style="top:391.55px;height:10px;line-height:10px;font-size:5.30px;color:#000;font-weight:700;left:64.80px;">Sales &amp; General Admin Expenses (SG&amp;A)</div>
<div class="t" style="top:400.80px;height:10px;line-height:10px;font-size:4.50px;color:#000;font-weight:400;left:64.80px;">% Margin</div>
<div class="t" style="top:391.55px;height:10px;line-height:10px;font-size:5.35px;color:#000;font-weight:700;left:188.50px;width:40.00px;text-align:center;">USD</div>
<div class="t" style="top:400.60px;height:10px;line-height:10px;font-size:5.20px;color:#000;font-weight:400;left:188.20px;width:40.00px;text-align:center;">%</div>
<div class="t" style="top:391.55px;height:10px;line-height:10px;font-size:5.70px;color:#000;font-weight:700;left:359.75px;width:34.00px;text-align:center;">1,600,000</div>
<div class="t" style="top:400.10px;height:10px;line-height:10px;font-size:5.00px;color:#0000FF;font-weight:400;left:359.75px;width:34.00px;text-align:center;">26.7%</div>
<div class="t" style="top:391.55px;height:10px;line-height:10px;font-size:5.70px;color:#000;font-weight:700;left:392.40px;width:34.00px;text-align:center;">1,400,000</div>
<div class="t" style="top:400.10px;height:10px;line-height:10px;font-size:5.00px;color:#0000FF;font-weight:400;left:392.40px;width:34.00px;text-align:center;">21.5%</div>
<div class="t" style="top:391.55px;height:10px;line-height:10px;font-size:5.70px;color:#000;font-weight:700;left:425.50px;width:34.00px;text-align:center;">1,501,500</div>
<div class="t" style="top:400.10px;height:10px;line-height:10px;font-size:5.00px;color:#0000FF;font-weight:400;left:425.50px;width:34.00px;text-align:center;">22.0%</div>
<div class="t" style="top:391.55px;height:10px;line-height:10px;font-size:5.70px;color:#000;font-weight:700;left:459.35px;width:34.00px;text-align:center;">1,504,913</div>
<div class="t" style="top:400.10px;height:10px;line-height:10px;font-size:5.00px;color:#0000FF;font-weight:400;left:459.35px;width:34.00px;text-align:center;">21.0%</div>
<div class="t" style="top:391.55px;height:10px;line-height:10px;font-size:5.70px;color:#000;font-weight:700;left:493.20px;width:34.00px;text-align:center;">1,504,913</div>
<div class="t" style="top:400.10px;height:10px;line-height:10px;font-size:5.00px;color:#0000FF;font-weight:400;left:493.20px;width:34.00px;text-align:center;">20.0%</div>
<div class="t" style="top:391.55px;height:10px;line-height:10px;font-size:5.70px;color:#000;font-weight:700;left:527.05px;width:34.00px;text-align:center;">1,580,158</div>
<div class="t" style="top:400.10px;height:10px;line-height:10px;font-size:5.00px;color:#0000FF;font-weight:400;left:527.05px;width:34.00px;text-align:center;">20.0%</div>
<div class="t" style="top:391.55px;height:10px;line-height:10px;font-size:5.70px;color:#000;font-weight:700;left:561.35px;width:34.00px;text-align:center;">1,659,166</div>
<div class="t" style="top:400.10px;height:10px;line-height:10px;font-size:5.00px;color:#0000FF;font-weight:400;left:561.35px;width:34.00px;text-align:center;">20.0%</div>
<div style="left:360.30px;top:412.10px;width:235.40px;height:17.70px;background:#fff;"></div>
<div style="left:359.80px;top:411.60px;width:236.40px;height:1.00px;background:#6a6a6a;"></div>
<div style="left:359.80px;top:420.65px;width:236.40px;height:1.10px;background:#6a6a6a;"></div>
<div style="left:359.80px;top:429.20px;width:236.40px;height:1.20px;background:#6a6a6a;"></div>
<div style="left:359.75px;top:411.60px;width:1.10px;height:18.80px;background:#4a4a4a;"></div>
<div style="left:392.50px;top:411.60px;width:1.40px;height:18.80px;background:#4a4a4a;"></div>
<div style="left:424.90px;top:411.60px;width:1.40px;height:18.80px;background:#4a4a4a;"></div>
<div style="left:458.70px;top:411.60px;width:1.40px;height:18.80px;background:#4a4a4a;"></div>
<div style="left:492.60px;top:411.60px;width:1.40px;height:18.80px;background:#4a4a4a;"></div>
<div style="left:526.40px;top:411.60px;width:1.40px;height:18.80px;background:#4a4a4a;"></div>
<div style="left:560.30px;top:411.60px;width:1.40px;height:18.80px;background:#4a4a4a;"></div>
<div style="left:595.15px;top:411.60px;width:1.10px;height:18.80px;background:#4a4a4a;"></div>
<div class="t" style="top:411.85px;height:10px;line-height:10px;font-size:5.30px;color:#000;font-weight:700;left:64.80px;">EBITDA</div>
<div class="t" style="top:421.10px;height:10px;line-height:10px;font-size:4.50px;color:#000;font-weight:400;left:64.80px;">% Margin</div>
<div class="t" style="top:411.85px;height:10px;line-height:10px;font-size:5.35px;color:#000;font-weight:700;left:188.50px;width:40.00px;text-align:center;">USD</div>
<div class="t" style="top:420.90px;height:10px;line-height:10px;font-size:5.20px;color:#000;font-weight:400;left:188.20px;width:40.00px;text-align:center;">%</div>
<div class="t" style="top:411.85px;height:10px;line-height:10px;font-size:5.70px;color:#000;font-weight:700;left:359.75px;width:34.00px;text-align:center;">2,400,000</div>
<div class="t" style="top:420.40px;height:10px;line-height:10px;font-size:5.00px;color:#000;font-weight:400;left:359.75px;width:34.00px;text-align:center;">40.0%</div>
<div class="t" style="top:411.85px;height:10px;line-height:10px;font-size:5.70px;color:#000;font-weight:700;left:392.40px;width:34.00px;text-align:center;">2,900,000</div>
<div class="t" style="top:420.40px;height:10px;line-height:10px;font-size:5.00px;color:#000;font-weight:400;left:392.40px;width:34.00px;text-align:center;">44.6%</div>
<div class="t" style="top:411.85px;height:10px;line-height:10px;font-size:5.70px;color:#000;font-weight:700;left:425.50px;width:34.00px;text-align:center;">3,003,000</div>
<div class="t" style="top:420.40px;height:10px;line-height:10px;font-size:5.00px;color:#000;font-weight:400;left:425.50px;width:34.00px;text-align:center;">44.0%</div>
<div class="t" style="top:411.85px;height:10px;line-height:10px;font-size:5.70px;color:#000;font-weight:700;left:459.35px;width:34.00px;text-align:center;">3,368,138</div>
<div class="t" style="top:420.40px;height:10px;line-height:10px;font-size:5.00px;color:#000;font-weight:400;left:459.35px;width:34.00px;text-align:center;">47.0%</div>
<div class="t" style="top:411.85px;height:10px;line-height:10px;font-size:5.70px;color:#000;font-weight:700;left:493.20px;width:34.00px;text-align:center;">3,687,036</div>
<div class="t" style="top:420.40px;height:10px;line-height:10px;font-size:5.00px;color:#000;font-weight:400;left:493.20px;width:34.00px;text-align:center;">49.0%</div>
<div class="t" style="top:411.85px;height:10px;line-height:10px;font-size:5.70px;color:#000;font-weight:700;left:527.05px;width:34.00px;text-align:center;">3,950,395</div>
<div class="t" style="top:420.40px;height:10px;line-height:10px;font-size:5.00px;color:#000;font-weight:400;left:527.05px;width:34.00px;text-align:center;">50.0%</div>
<div class="t" style="top:411.85px;height:10px;line-height:10px;font-size:5.70px;color:#000;font-weight:700;left:561.35px;width:34.00px;text-align:center;">4,147,915</div>
<div class="t" style="top:420.40px;height:10px;line-height:10px;font-size:5.00px;color:#000;font-weight:400;left:561.35px;width:34.00px;text-align:center;">50.0%</div>
<div style="left:2.30px;top:431.50px;width:593.70px;height:1.50px;background:#1F3864;"></div>
<div style="left:2.30px;top:433.00px;width:593.70px;height:8.50px;background:#C5D9F1;"></div>
<div class="t" style="top:432.20px;height:10px;line-height:10px;font-size:7.00px;color:#16213E;font-weight:700;left:10.80px;">2 . Depreciation</div>
<div style="left:360.30px;top:443.20px;width:235.40px;height:9.00px;background:#DCE6F1;"></div>
<div style="left:359.80px;top:442.70px;width:236.40px;height:1.00px;background:#6a6a6a;"></div>
<div style="left:359.80px;top:451.57px;width:236.40px;height:1.25px;background:#6a6a6a;"></div>
<div style="left:359.75px;top:442.70px;width:1.10px;height:10.10px;background:#4a4a4a;"></div>
<div style="left:392.50px;top:442.70px;width:1.40px;height:10.10px;background:#4a4a4a;"></div>
<div style="left:424.90px;top:442.70px;width:1.40px;height:10.10px;background:#4a4a4a;"></div>
<div style="left:458.70px;top:442.70px;width:1.40px;height:10.10px;background:#4a4a4a;"></div>
<div style="left:492.60px;top:442.70px;width:1.40px;height:10.10px;background:#4a4a4a;"></div>
<div style="left:526.40px;top:442.70px;width:1.40px;height:10.10px;background:#4a4a4a;"></div>
<div style="left:560.30px;top:442.70px;width:1.40px;height:10.10px;background:#4a4a4a;"></div>
<div style="left:595.15px;top:442.70px;width:1.10px;height:10.10px;background:#4a4a4a;"></div>
<div class="t" style="top:442.80px;height:10px;line-height:10px;font-size:5.70px;color:#0000FF;font-weight:400;left:359.75px;width:34.00px;text-align:center;">300,000</div>
<div class="t" style="top:442.80px;height:10px;line-height:10px;font-size:5.70px;color:#0000FF;font-weight:400;left:392.40px;width:34.00px;text-align:center;">300,000</div>
<div class="t" style="top:442.80px;height:10px;line-height:10px;font-size:5.70px;color:#0000FF;font-weight:400;left:425.50px;width:34.00px;text-align:center;">605,417</div>
<div class="t" style="top:442.80px;height:10px;line-height:10px;font-size:5.70px;color:#0000FF;font-weight:400;left:459.35px;width:34.00px;text-align:center;">656,604</div>
<div class="t" style="top:442.80px;height:10px;line-height:10px;font-size:5.70px;color:#0000FF;font-weight:400;left:493.20px;width:34.00px;text-align:center;">710,351</div>
<div class="t" style="top:442.80px;height:10px;line-height:10px;font-size:5.70px;color:#0000FF;font-weight:400;left:527.05px;width:34.00px;text-align:center;">766,785</div>
<div class="t" style="top:442.80px;height:10px;line-height:10px;font-size:5.70px;color:#0000FF;font-weight:400;left:561.35px;width:34.00px;text-align:center;">826,041</div>
<div class="t" style="top:442.80px;height:10px;line-height:10px;font-size:5.95px;color:#000;font-weight:400;left:64.80px;">Depreciation &amp; Amortization</div>
<div class="t" style="top:442.80px;height:10px;line-height:10px;font-size:5.60px;color:#000;font-weight:400;left:188.50px;width:40.00px;text-align:center;">USD</div>
</div></body></html>
